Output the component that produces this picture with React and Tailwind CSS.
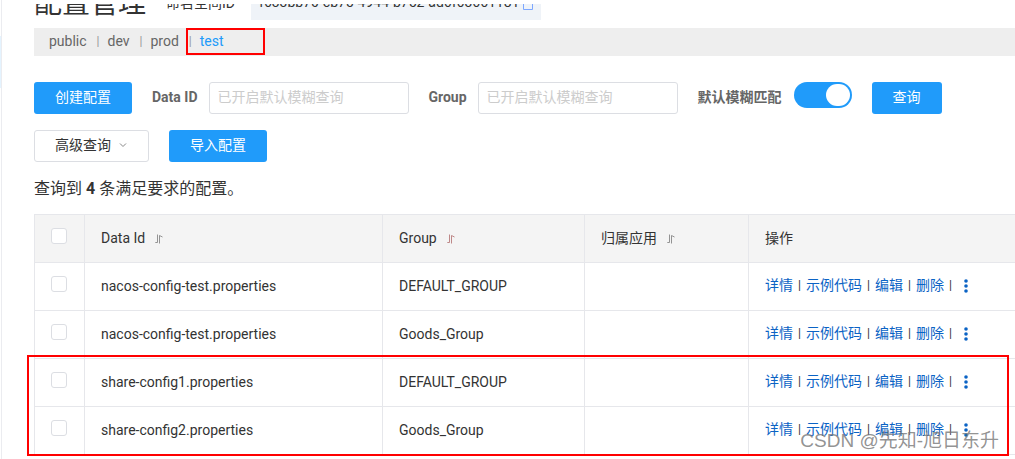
import React from 'react';

const NAMESPACES = ['public', 'dev', 'prod', 'test'];
const ROWS = [
  { id: 'nacos-config-test.properties', group: 'DEFAULT_GROUP' },
  { id: 'nacos-config-test.properties', group: 'Goods_Group' },
  { id: 'share-config1.properties', group: 'DEFAULT_GROUP' },
  { id: 'share-config2.properties', group: 'Goods_Group' },
];
const ACTIONS = ['详情', '示例代码', '编辑', '删除'];

function SortIcon({ warm }) {
  return (
    <svg className={warm ? 'h-2.5 w-2 text-[#b87c7c]' : 'h-2.5 w-2 text-[#888]'} viewBox="0 0 8 10" fill="none" stroke="currentColor" strokeWidth="0.9" aria-hidden="true">
      <path d="M2.5 0.5V8.5L0.3 8.5" />
      <path d="M4.5 9.5V1.5L7.5 3" />
    </svg>
  );
}

function SortHeader({ children, warm }) {
  return (
    <th className="border border-[#e6e7eb] px-4 pb-0.5 text-left font-normal">
      <button type="button" className="flex items-center gap-2.5">
        {children}
        <span className="pt-0.5"><SortIcon warm={warm} /></span>
      </button>
    </th>
  );
}

function Check({ label }) {
  return (
    <input
      type="checkbox"
      aria-label={label}
      className="mb-1.5 block size-4 appearance-none rounded-[3px] border border-[#dcdee3] bg-white checked:bg-[#209bfa]"
    />
  );
}

function SearchField({ id, label }) {
  return (
    <div className="flex items-center gap-[11px]">
      <label htmlFor={id} className="pb-0.5 font-bold text-[#666]">{label}</label>
      <input
        id={id}
        placeholder="已开启默认模糊查询"
        className="h-8 w-50 rounded-[3px] border border-[#dcdee3] px-2 pb-0.5 placeholder:text-[#ccc]"
      />
    </div>
  );
}

const primary = 'h-8 rounded-[3px] bg-[#209bfa] px-[21px] pb-0.5 text-white';

export default function App() {
  return (
    <div className="relative flex overflow-hidden bg-white font-['Roboto','Noto_Sans_CJK_SC',sans-serif] text-sm text-[#333]">
      <aside className="w-0.5 shrink-0 border-r border-[#ebecf0] pt-9">
        <div className="h-13 bg-[#e4f3fe]" />
      </aside>
      <main className="min-w-0 flex-1 pt-1 pl-8">
        <header className="flex h-4 items-end gap-5 overflow-hidden">
          <h1 className="text-[28px] leading-8 whitespace-nowrap">配置管理</h1>
          <div className="flex items-center gap-4">
            <span className="h-8 leading-[30px]">命名空间ID</span>
            <span className="flex h-8 items-start gap-1 bg-[#eff3f8] px-2 leading-7">
              f633bb70-cb75-4944-b752-ad6f63661181
              <svg className="mt-2.5 h-3 w-2.5 text-[#7da7ff]" viewBox="0 0 10 12" fill="none" stroke="currentColor" aria-hidden="true">
                <path d="M0.5 0.5H9.5V11.5H0.5Z" />
              </svg>
            </span>
          </div>
        </header>

        <nav className="mt-2 flex h-7 items-center bg-[#eee] pb-0.5 pl-[15px] text-[#666]">
          {NAMESPACES.map((name, i) => (
            <React.Fragment key={name}>
              {i > 0 && <span className="mr-2 ml-2.5 text-xs text-[#999]">|</span>}
              {name === 'test' ? (
                <span className="relative">
                  <a href="#test" className="text-[#209bfa]">{name}</a>
                  <span className="pointer-events-none absolute -top-[3px] -left-3.5 h-[27px] w-[79px] border-2 border-[#f00]" />
                </span>
              ) : (
                <a href={'#' + name}>{name}</a>
              )}
            </React.Fragment>
          ))}
        </nav>

        <form className="mt-[26px] flex flex-wrap gap-x-5 gap-y-4" onSubmit={(e) => e.preventDefault()}>
          <button type="button" className={primary}>创建配置</button>
          <SearchField id="data-id" label="Data ID" />
          <SearchField id="group" label="Group" />
          <div className="flex items-start gap-3">
            <label htmlFor="fuzzy" className="leading-[30px] font-bold text-[#666]">默认模糊匹配</label>
            <span className="relative flex h-[26px] w-[58px]">
              <input id="fuzzy" type="checkbox" role="switch" defaultChecked className="peer h-full w-full appearance-none rounded-full bg-[#ccc] checked:bg-[#209bfa]" />
              <span className="pointer-events-none absolute top-0.5 left-0.5 h-[22px] w-6 rounded-full bg-white peer-checked:left-8" />
            </span>
          </div>
          <button type="submit" className={primary}>查询</button>
          <div className="flex w-full gap-5">
            <button type="button" className="flex h-8 items-center gap-2 rounded-[3px] border border-[#dcdee3] pr-[21px] pb-0.5 pl-5">
              高级查询
              <svg className="h-2 w-2 text-[#888]" viewBox="0 0 8 8" fill="none" stroke="currentColor" aria-hidden="true">
                <path d="M1 2.5L4 5.5L7 2.5" />
              </svg>
            </button>
            <button type="button" className={primary}>导入配置</button>
          </div>
        </form>

        <p className="mt-[13px] text-base leading-7">
          查询到 <strong>4</strong> 条满足要求的配置。
        </p>

        <div className="relative mt-[11px]">
          <table className="w-full table-fixed border-collapse">
            <colgroup>
              <col className="w-[50px]" />
              <col className="w-[298px]" />
              <col className="w-[202px]" />
              <col className="w-[164px]" />
              <col />
            </colgroup>
            <thead>
              <tr className="h-12 bg-[#f4f4f4]">
                <th className="border border-[#e6e7eb] px-4"><Check label="全选" /></th>
                <SortHeader>Data Id</SortHeader>
                <SortHeader warm>Group</SortHeader>
                <SortHeader>归属应用</SortHeader>
                <th className="border border-r-0 border-[#e6e7eb] px-4 pb-0.5 text-left font-normal">操作</th>
              </tr>
            </thead>
            <tbody>
              {ROWS.map((row, i) => (
                <tr key={i} className="h-12">
                  <td className="border border-[#e6e7eb] px-4"><Check label={row.id + ' ' + row.group} /></td>
                  <td className="border border-[#e6e7eb] px-4 pb-0.5">{row.id}</td>
                  <td className="border border-[#e6e7eb] px-4 pb-0.5">{row.group}</td>
                  <td className="border border-[#e6e7eb] px-4" />
                  <td className="border border-r-0 border-[#e6e7eb] px-4 pb-1">
                    <div className="flex items-center text-[#0b63c5]">
                      {ACTIONS.map((a) => (
                        <React.Fragment key={a}>
                          <a href="#action" className="whitespace-nowrap">{a}</a>
                          <span className="w-[13px] text-center text-xs text-[#333]">|</span>
                        </React.Fragment>
                      ))}
                      <button type="button" aria-label="更多" className="ml-[7px] pt-0.5">
                        <svg className="h-3.5 w-1" viewBox="0 0 4 14" fill="currentColor" aria-hidden="true">
                          <circle cx="2" cy="2" r="1.8" />
                          <circle cx="2" cy="7" r="1.8" />
                          <circle cx="2" cy="12" r="1.8" />
                        </svg>
                      </button>
                    </div>
                  </td>
                </tr>
              ))}
            </tbody>
          </table>
          <div className="pointer-events-none absolute right-1.5 -bottom-px -left-[7px] h-[101px] border-2 border-[#f00]" />
          <p className="pointer-events-none absolute right-4 bottom-0.5 font-['Liberation_Sans','Noto_Sans_CJK_SC',sans-serif] text-[19px] leading-6 text-[#777]/80">
            CSDN @先知-旭日东升
          </p>
        </div>
        <div className="h-1" />
      </main>
    </div>
  );
}
